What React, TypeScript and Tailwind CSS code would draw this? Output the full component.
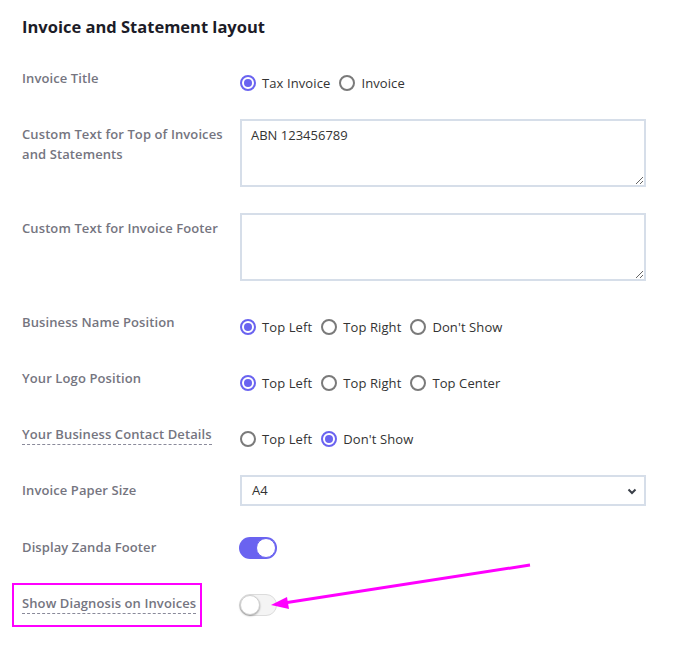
import React from 'react';

type Opt = { label: string; checked?: boolean };

function Radio({ checked }: { checked?: boolean }) {
  return checked ? (
    <span className="flex h-[16px] w-[16px] items-center justify-center rounded-full border-2 border-[#6a63f0] bg-white">
      <span className="h-[8px] w-[8px] rounded-full bg-[#6a63f0]" />
    </span>
  ) : (
    <span className="h-[16px] w-[16px] rounded-full border-2 border-[#7a7a7a] bg-white" />
  );
}

function RadioGroup({ options }: { options: Opt[] }) {
  return (
    <div className="flex items-center gap-[9px] pt-[10px] leading-[20px]">
      {options.map((o) => (
        <label key={o.label} className="flex items-center gap-[6px] text-[13px] tracking-[0.1px] text-[#333]">
          <Radio checked={o.checked} />
          {o.label}
        </label>
      ))}
    </div>
  );
}

function Toggle({ on }: { on?: boolean }) {
  return on ? (
    <div className="-ml-[1px] mt-[5px] flex h-[22px] w-[38px] items-center justify-end rounded-full bg-[#6a63f0] pr-[1px]">
      <span className="h-[20px] w-[20px] rounded-full border border-[#6a63f0] bg-white" />
    </div>
  ) : (
    <div className="-ml-[1px] mt-[6px] flex h-[22px] w-[38px] items-center rounded-full border border-[#dcdcdc] bg-[#f4f4f4]">
      <span className="h-[20px] w-[20px] rounded-full border border-[#d0d0d0] bg-white shadow-[0_1px_2px_rgba(0,0,0,0.35)]" />
    </div>
  );
}

function Row({
  label,
  dashed,
  children,
}: {
  label: React.ReactNode;
  dashed?: boolean;
  children: React.ReactNode;
}) {
  return (
    <div className="mb-[26px] flex min-h-[30px]">
      <div className="w-[218px] shrink-0 pr-[14px] pt-[5px] text-[13px] font-semibold leading-[20px] tracking-[0.1px] text-[#75757f]">
        {dashed ? (
          <span className="border-b border-dashed border-[#8a8a9a] pb-[1px]">{label}</span>
        ) : (
          label
        )}
      </div>
      <div className="w-[406px]">{children}</div>
    </div>
  );
}

export default function App() {
  return (
    <div
      className="relative h-[649px] w-[675px] overflow-hidden bg-white pl-[22px] pt-[16px]"
      style={{ fontFamily: '"Open Sans", "Liberation Sans", sans-serif' }}
    >
      <h2 className="mb-[25px] text-[16.5px] font-bold leading-[22px] text-[#1c1c28]">
        Invoice and Statement layout
      </h2>

      <Row label="Invoice Title">
        <RadioGroup options={[{ label: 'Tax Invoice', checked: true }, { label: 'Invoice' }]} />
      </Row>

      <Row label="Custom Text for Top of Invoices and Statements">
        <textarea
          defaultValue="ABN 123456789"
          className="block h-[68px] w-full border-2 border-[#d6dee9] px-[9px] py-[4px] text-[13px] leading-[20px] text-[#333] outline-none"
        />
      </Row>

      <Row label="Custom Text for Invoice Footer">
        <textarea className="block h-[68px] w-full border-2 border-[#d6dee9] px-[9px] py-[4px] text-[13px] text-[#333] outline-none" />
      </Row>

      <Row label="Business Name Position">
        <RadioGroup
          options={[{ label: 'Top Left', checked: true }, { label: 'Top Right' }, { label: "Don't Show" }]}
        />
      </Row>

      <Row label="Your Logo Position">
        <RadioGroup
          options={[{ label: 'Top Left', checked: true }, { label: 'Top Right' }, { label: 'Top Center' }]}
        />
      </Row>

      <Row label="Your Business Contact Details" dashed>
        <RadioGroup options={[{ label: 'Top Left' }, { label: "Don't Show", checked: true }]} />
      </Row>

      <Row label="Invoice Paper Size">
        <div className="flex h-[31px] w-full items-center justify-between border-2 border-[#d6dee9] pl-[10px] pr-[6px] text-[13px] text-[#333]">
          <span>A4</span>
          <svg width="12" height="12" viewBox="0 0 12 12">
            <path d="M2.5 4.5 L6 8 L9.5 4.5" fill="none" stroke="#3a3f48" strokeWidth="2" />
          </svg>
        </div>
      </Row>

      <Row label="Display Zanda Footer">
        <Toggle on />
      </Row>

      <Row label="Show Diagnosis on Invoices" dashed>
        <Toggle />
      </Row>

      {/* annotation overlay */}
      <div className="absolute left-[12px] top-[583px] h-[44px] w-[190px] border-2 border-[#ff00ff]" />
      <svg className="absolute left-0 top-0" width="675" height="649" viewBox="0 0 675 649">
        <line x1="530" y1="565" x2="284" y2="603" stroke="#ff00ff" strokeWidth="3" />
        <polygon points="271,605 287,597 289,609" fill="#ff00ff" />
      </svg>
    </div>
  );
}
